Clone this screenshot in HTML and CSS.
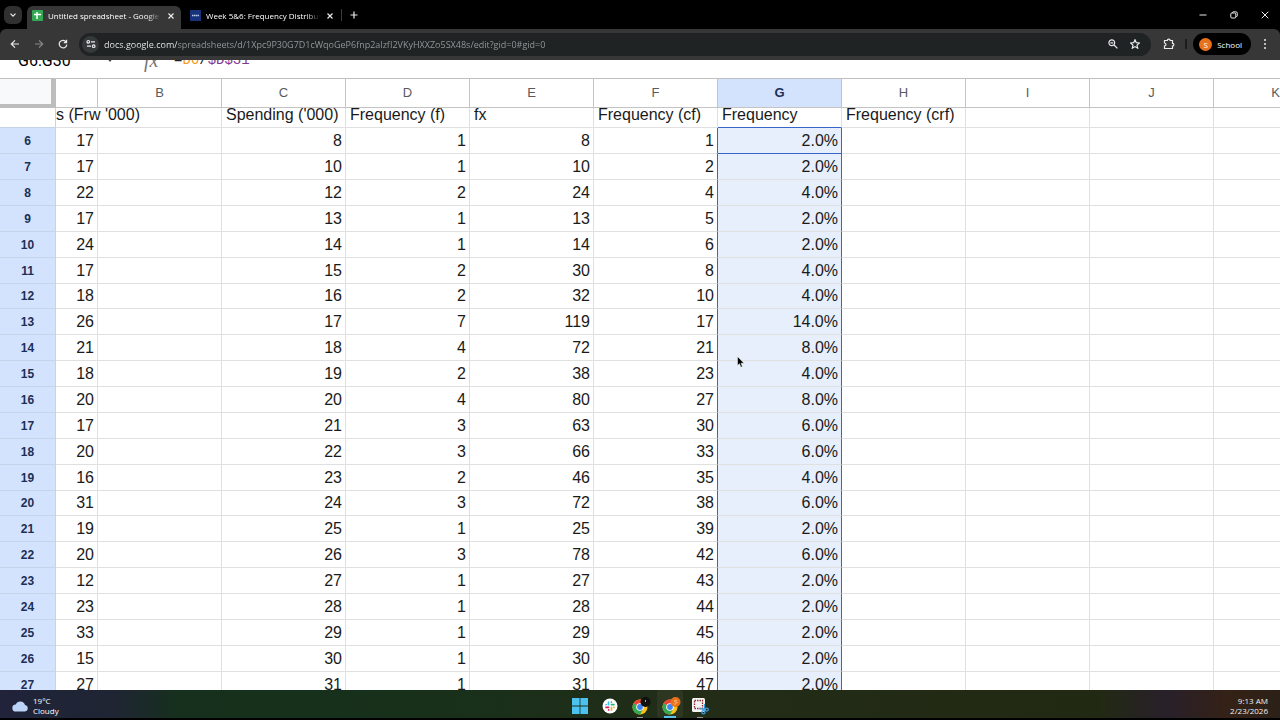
FILE: index.html
```html
<!DOCTYPE html>
<html lang="en">
<head>
    <meta charset="UTF-8">
    <meta name="viewport" content="width=device-width, initial-scale=1.0">
    <title>Untitled spreadsheet - Google Sheets</title>
    <link rel="stylesheet" href="styles.css">
</head>
<body>
  <header class="browser">
    <div class="tabBar">
      <button class="tabSearch" aria-label="Search tabs">
        <svg width="8" height="8" viewBox="0 0 8 8"><path d="M1.5 2.7 4 5.2 6.5 2.7"/></svg>
      </button>
      <div class="tab active">
        <svg class="favicon" width="11" height="11" viewBox="0 0 11 11"><rect width="11" height="11" rx="1" fill="#34a853"/><path d="M5 2v7M2 4.5h7" stroke="#fff" stroke-width="1.5"/></svg>
        <a class="tabTitle" href="#">Untitled spreadsheet - Google S</a>
        <button aria-label="Close tab"><svg width="8" height="8" viewBox="0 0 8 8"><path d="M1.5 1.5l5 5M6.5 1.5l-5 5"/></svg></button>
      </div>
      <div class="tab">
        <svg class="favicon" width="11" height="11" viewBox="0 0 11 11"><rect width="11" height="11" fill="#15327a"/><path d="M2 5.5h7" stroke="#b9c7ea" stroke-width="1.3" stroke-dasharray="1.6 .4"/></svg>
        <a class="tabTitle" href="#">Week 5&amp;6: Frequency Distribut</a>
        <button aria-label="Close tab"><svg width="8" height="8" viewBox="0 0 8 8"><path d="M1.5 1.5l5 5M6.5 1.5l-5 5"/></svg></button>
      </div>
      <button class="newTab" aria-label="New tab"><svg width="8" height="8" viewBox="0 0 8 8"><path d="M4 .5v7M.5 4h7"/></svg></button>
      <div class="windowBtns">
        <button aria-label="Minimize"><svg width="8" height="8" viewBox="0 0 8 8"><path d="M.5 4h7"/></svg></button>
        <button aria-label="Restore"><svg width="8" height="8" viewBox="0 0 8 8"><rect x=".8" y="2" width="5" height="5" rx="1"/><path d="M2.5 2V1.6q0-.8.8-.8h2.5q1.5 0 1.5 1.5v2.4q0 .8-.8.8H6"/></svg></button>
        <button aria-label="Close"><svg width="8" height="8" viewBox="0 0 8 8"><path d="M.7.7l6.6 6.6M7.3.7.7 7.3"/></svg></button>
      </div>
    </div>

    <div class="toolbar">
      <div class="navBtns">
        <button aria-label="Back"><svg width="10" height="10" viewBox="0 0 10 10"><path d="M9 5H1.5M5 1.3 1.3 5 5 8.7"/></svg></button>
        <button class="off" aria-label="Forward" disabled><svg width="10" height="10" viewBox="0 0 10 10"><path d="M1 5h7.5M5 1.3 8.7 5 5 8.7"/></svg></button>
        <button aria-label="Reload"><svg width="10" height="10" viewBox="0 0 10 10"><path d="M8.2 3A3.8 3.8 0 1 0 8.8 5.6M8.6.8v2.8H5.8"/></svg></button>
      </div>
      <div class="urlBox">
        <button class="siteInfo" aria-label="Site information"><svg width="10" height="10" viewBox="0 0 10 10"><circle cx="2.3" cy="2.8" r="1.3"/><path d="M5 2.8h4M1 7.2h4"/><circle cx="7.7" cy="7.2" r="1.3"/></svg></button>
        <input class="url" type="text" aria-label="Address" value="docs.google.com/spreadsheets/d/1Xpc9P30G7D1cWqoGeP6fnp2alzfI2VKyHXXZo5SX48s/edit?gid=0#gid=0">
        <button aria-label="Zoom"><svg width="10" height="10" viewBox="0 0 10 10"><circle cx="3.8" cy="3.8" r="2.9"/><path d="M6 6l3.4 3.4M2.4 3.8h2.8"/></svg></button>
        <button aria-label="Bookmark"><svg width="10" height="10" viewBox="0 0 10 10"><path d="M5 .8 6.3 3.7l3.1.3L7 6.1l.7 3.1L5 7.6 2.3 9.2 3 6.1.6 4l3.1-.3z"/></svg></button>
      </div>
      <button class="extensions" aria-label="Extensions"><svg width="12" height="12" viewBox="0 0 12 12"><path d="M1.5 2.5h2.8a1.4 1.4 0 0 1 2.8 0h2.4v2.8a1.4 1.4 0 0 1 0 2.8v2.4h-8V8q1.5-.4 1.5-1.5T1.5 5z"/></svg></button>
      <span class="divider"></span>
      <button class="profile"><span>S</span>School</button>
      <button class="more" aria-label="Menu"><svg width="4" height="12" viewBox="0 0 4 12"><circle cx="2" cy="2" r="1"/><circle cx="2" cy="6" r="1"/><circle cx="2" cy="10" r="1"/></svg></button>
    </div>
  </header>

  <main class="sheet">
    <div class="formulaBar">
      <input class="nameBox" type="text" aria-label="Name box" value="G6:G30">
      <svg class="drop" width="8" height="5" viewBox="0 0 8 5"><path d="M0 0h8L4 5z" fill="#444"/></svg>
      <span class="fx">fx</span>
      <div class="formula" contenteditable="true">=<span class="ref1">D6</span>/<span class="ref2">$D$31</span></div>
    </div>

    <div class="gridWrap">
      <table class="grid">
        <colgroup>
          <col class="colNum"><col class="colA"><col span="10">
        </colgroup>
        <thead>
          <tr><th class="corner"></th><th></th><th>B</th><th>C</th><th>D</th><th>E</th><th>F</th><th class="selected">G</th><th>H</th><th>I</th><th>J</th><th>K</th></tr>
        </thead>
        <tbody>
          <tr class="titles"><th></th><td class="over">s (Frw '000)</td><td></td><td>Spending ('000)</td><td>Frequency (f)</td><td>fx</td><td>Frequency (cf)</td><td>Frequency</td><td>Frequency (crf)</td><td></td><td></td><td></td></tr>
          <tr><th>6</th><td>17</td><td></td><td>8</td><td>1</td><td>8</td><td>1</td><td>2.0%</td><td></td><td></td><td></td><td></td></tr>
          <tr><th>7</th><td>17</td><td></td><td>10</td><td>1</td><td>10</td><td>2</td><td>2.0%</td><td></td><td></td><td></td><td></td></tr>
          <tr><th>8</th><td>22</td><td></td><td>12</td><td>2</td><td>24</td><td>4</td><td>4.0%</td><td></td><td></td><td></td><td></td></tr>
          <tr><th>9</th><td>17</td><td></td><td>13</td><td>1</td><td>13</td><td>5</td><td>2.0%</td><td></td><td></td><td></td><td></td></tr>
          <tr><th>10</th><td>24</td><td></td><td>14</td><td>1</td><td>14</td><td>6</td><td>2.0%</td><td></td><td></td><td></td><td></td></tr>
          <tr><th>11</th><td>17</td><td></td><td>15</td><td>2</td><td>30</td><td>8</td><td>4.0%</td><td></td><td></td><td></td><td></td></tr>
          <tr><th>12</th><td>18</td><td></td><td>16</td><td>2</td><td>32</td><td>10</td><td>4.0%</td><td></td><td></td><td></td><td></td></tr>
          <tr><th>13</th><td>26</td><td></td><td>17</td><td>7</td><td>119</td><td>17</td><td>14.0%</td><td></td><td></td><td></td><td></td></tr>
          <tr><th>14</th><td>21</td><td></td><td>18</td><td>4</td><td>72</td><td>21</td><td>8.0%</td><td></td><td></td><td></td><td></td></tr>
          <tr><th>15</th><td>18</td><td></td><td>19</td><td>2</td><td>38</td><td>23</td><td>4.0%</td><td></td><td></td><td></td><td></td></tr>
          <tr><th>16</th><td>20</td><td></td><td>20</td><td>4</td><td>80</td><td>27</td><td>8.0%</td><td></td><td></td><td></td><td></td></tr>
          <tr><th>17</th><td>17</td><td></td><td>21</td><td>3</td><td>63</td><td>30</td><td>6.0%</td><td></td><td></td><td></td><td></td></tr>
          <tr><th>18</th><td>20</td><td></td><td>22</td><td>3</td><td>66</td><td>33</td><td>6.0%</td><td></td><td></td><td></td><td></td></tr>
          <tr><th>19</th><td>16</td><td></td><td>23</td><td>2</td><td>46</td><td>35</td><td>4.0%</td><td></td><td></td><td></td><td></td></tr>
          <tr><th>20</th><td>31</td><td></td><td>24</td><td>3</td><td>72</td><td>38</td><td>6.0%</td><td></td><td></td><td></td><td></td></tr>
          <tr><th>21</th><td>19</td><td></td><td>25</td><td>1</td><td>25</td><td>39</td><td>2.0%</td><td></td><td></td><td></td><td></td></tr>
          <tr><th>22</th><td>20</td><td></td><td>26</td><td>3</td><td>78</td><td>42</td><td>6.0%</td><td></td><td></td><td></td><td></td></tr>
          <tr><th>23</th><td>12</td><td></td><td>27</td><td>1</td><td>27</td><td>43</td><td>2.0%</td><td></td><td></td><td></td><td></td></tr>
          <tr><th>24</th><td>23</td><td></td><td>28</td><td>1</td><td>28</td><td>44</td><td>2.0%</td><td></td><td></td><td></td><td></td></tr>
          <tr><th>25</th><td>33</td><td></td><td>29</td><td>1</td><td>29</td><td>45</td><td>2.0%</td><td></td><td></td><td></td><td></td></tr>
          <tr><th>26</th><td>15</td><td></td><td>30</td><td>1</td><td>30</td><td>46</td><td>2.0%</td><td></td><td></td><td></td><td></td></tr>
          <tr><th>27</th><td>27</td><td></td><td>31</td><td>1</td><td>31</td><td>47</td><td>2.0%</td><td></td><td></td><td></td><td></td></tr>
        </tbody>
      </table>
    </div>
  </main>

  <footer class="taskbar">
    <button class="weather">
      <svg width="17" height="12" viewBox="0 0 17 12"><path d="M4 11.5a3.5 3.5 0 0 1-.3-7A5 5 0 0 1 13 5a3.3 3.3 0 0 1 0 6.5z" fill="#bcd4f8"/></svg>
      <span>19°C<br>Cloudy</span>
    </button>
    <div class="apps">
      <button aria-label="Start"><svg width="16" height="16" viewBox="0 0 16 16"><path d="M0 0h7.600v7.600H0zM8.400 0H16v7.600H8.400zM0 8.400h7.600V16H0zM8.400 8.400H16V16H8.400z" fill="#4cc2f1"/></svg></button>
      <button aria-label="Slack">
        <svg width="16" height="16" viewBox="0 0 16 16"><circle cx="8" cy="8" r="7.500" fill="#fff"/><g fill="none" stroke-width="1.700" stroke-linecap="round"><path d="M6.500 4v2.700M4 6.600h.1" stroke="#36c5f0"/><path d="M9.400 6.600H12M9.400 4v.1" stroke="#2eb67d"/><path d="M9.500 9.400V12M12 9.400h-.1" stroke="#ecb22e"/><path d="M4 9.400h2.600M6.600 12v-.1" stroke="#e01e5a"/></g></svg>
      </button>
      <button class="running" aria-label="Chrome">
        <svg width="22" height="18" viewBox="-3 0 22 18"><circle cx="8" cy="10" r="7.500" fill="#fbc116"/><path d="M8 10 1.500 6.250A7.500 7.500 0 0 1 14.500 6.250z" fill="#ea4335"/><path d="M8 10 1.500 6.250A7.500 7.500 0 0 0 8 17.500l3-5z" fill="#34a853"/><circle cx="8" cy="10" r="3.800" fill="#fff"/><circle cx="8" cy="10" r="2.900" fill="#4285f4"/><circle cx="13.500" cy="5" r="5" fill="#111"/><path d="M13.500 3v2" stroke="#aaa"/></svg>
      </button>
      <button class="running current" aria-label="Chrome, School">
        <svg width="22" height="18" viewBox="-3 0 22 18"><circle cx="8" cy="10" r="7.500" fill="#fbc116"/><path d="M8 10 1.500 6.250A7.500 7.500 0 0 1 14.500 6.250z" fill="#ea4335"/><path d="M8 10 1.500 6.250A7.500 7.500 0 0 0 8 17.500l3-5z" fill="#34a853"/><circle cx="8" cy="10" r="3.800" fill="#fff"/><circle cx="8" cy="10" r="2.900" fill="#4285f4"/><circle cx="13.500" cy="5" r="5" fill="#e8711c"/><path d="M15 3.600q-2.600-1-2.700.3t2 1.200-.1 1.500-2.300-.2" fill="none" stroke="#ffc48c" stroke-width=".8"/></svg>
      </button>
      <button class="running" aria-label="Snipping Tool">
        <svg width="18" height="18" viewBox="0 0 18 18"><rect x="1" y="1" width="13" height="14" rx="1.500" fill="#f4f4f4"/><rect x="3.500" y="3.500" width="8" height="8" fill="none" stroke="#8d2a32" stroke-width="1.300" stroke-dasharray="1.500 1"/><g fill="none" stroke="#3d9bdc" stroke-width="1.300"><path d="M13.500 7v6M8.500 11.500l6 1"/><circle cx="12.400" cy="15.300" r="1.600"/><circle cx="15.800" cy="12.600" r="1.500"/></g></svg>
      </button>
    </div>
    <div class="clock">9:13 AM<br>2/23/2026</div>
  </footer>

  <svg class="cursor" width="8" height="12" viewBox="0 0 8 12"><path d="M.5.500v9l2-1.800 1.400 3.500 1.500-.6L4 7.300h3z" fill="#000" stroke="#fff" stroke-width=".5"/></svg>
</body>
</html>
```
FILE: styles.css
```css
* {
  box-sizing: border-box;
}

body {
  margin: 0;
  height: 100vh;
  display: flex;
  flex-direction: column;
  overflow: hidden;
  background-color: #000;
  font-family: "Open Sans", "Noto Sans", sans-serif;
}

button {
  display: flex;
  align-items: center;
  justify-content: center;
  padding: 0;
  border: 0;
  background: none;
  color: #fff;
  font: inherit;
  flex-shrink: 0;
}

input {
  padding: 0;
  border: 0;
  outline: 0;
  background: none;
}

/* browser */
.browser {
  flex-shrink: 0;
  color: #e8eaed;
  font-size: 8px;
}

.browser svg {
  fill: none;
  stroke: #e8eaed;
  stroke-width: 1.2;
}

.browser .favicon {
  flex-shrink: 0;
  stroke: none;
}

.tabBar {
  display: flex;
  align-items: center;
  height: 29px;
}

.tabSearch {
  width: 18px;
  height: 18px;
  margin: 0 5px 0 4px;
  border-radius: 6px;
  background-color: #303030;
}

.tab {
  display: flex;
  align-items: center;
  gap: 5px;
  width: 154px;
  height: 23px;
  margin-top: 6px;
  padding: 0 5px 4px;
  border-radius: 6px 6px 0 0;
}

.tab + .tab {
  width: 160px;
  padding-left: 9px;
  padding-right: 6px;
}

.tab.active {
  background-color: #373737;
}

.tabTitle {
  flex: 1;
  overflow: hidden;
  color: #fff;
  font-weight: 500;
  text-decoration: none;
  white-space: nowrap;
  line-height: 16px;
  -webkit-mask-image: linear-gradient(to right, #000 88%, transparent);
  mask-image: linear-gradient(to right, #000 88%, transparent);
}

.tab button {
  width: 10px;
  height: 16px;
}

.newTab {
  width: 24px;
  height: 12px;
  border-left: 1px solid #3a3a3a;
}

.windowBtns {
  display: flex;
  gap: 14px;
  margin-left: auto;
  padding-right: 7px;
}

.windowBtns button {
  width: 17px;
  height: 16px;
}

.windowBtns svg {
  stroke-width: 1;
}

.toolbar {
  display: flex;
  align-items: center;
  height: 31px;
  padding: 0 13px 1px 5px;
  border-radius: 6px 6px 0 0;
  background-color: #373737;
}

.navBtns {
  display: flex;
  gap: 4px;
  margin-right: 6px;
}

.navBtns button {
  width: 20px;
  height: 20px;
}

.navBtns .off {
  opacity: .45;
}

.urlBox {
  flex: 1;
  display: flex;
  align-items: center;
  gap: 12px;
  height: 23px;
  padding: 0 11px 0 3px;
  border-radius: 12px;
  background-color: #1f2323;
}

.siteInfo {
  width: 17px;
  height: 17px;
  margin-right: -7px;
  border-radius: 50%;
  background-color: #363939;
}

/* host is brighter than the rest of the address */
.url {
  flex: 1;
  height: 20px;
  font-family: inherit;
  font-size: 9px;
  color: transparent;
  background: linear-gradient(to right, #f1f3f4 73px, #969c9e 73px);
  -webkit-background-clip: text;
  background-clip: text;
}

.extensions {
  margin: 0 10px 0 12px;
}

.divider {
  width: 2px;
  height: 10px;
  background-color: #1c1c1c;
}

.profile {
  gap: 5px;
  height: 22px;
  padding: 0 9px 0 6px;
  margin: 0 12px 0 6px;
  border-radius: 11px;
  background-color: #000;
}

.profile span {
  width: 13px;
  height: 13px;
  border-radius: 50%;
  background-color: #e8711c;
  line-height: 13px;
}

.browser .more svg {
  fill: #e8eaed;
  stroke: none;
}

/* spreadsheet */
.sheet {
  flex: 1;
  min-height: 0;
  display: flex;
  flex-direction: column;
  overflow: hidden;
  background-color: #fff;
  font-family: "Liberation Sans", Arial, sans-serif;
}

/* scrolled up, only the lower part shows */
.formulaBar {
  display: flex;
  align-items: flex-end;
  flex-shrink: 0;
  height: 18px;
  padding: 0 0 8px 18px;
  overflow: hidden;
  color: #202124;
  line-height: 20px;
}

.nameBox {
  width: 88px;
  height: 20px;
  font-family: Roboto, sans-serif;
  font-size: 16px;
}

.drop {
  margin-bottom: 8px;
}

.fx {
  width: 30px;
  margin-left: 30px;
  color: #777;
  font-family: "Liberation Serif", serif;
  font-size: 20px;
  font-style: italic;
}

.formula {
  flex: 1;
  outline: 0;
  font-family: "Liberation Mono", monospace;
  font-size: 14px;
}

.ref1 {
  color: #f7981d;
}

.ref2 {
  color: #7e3794;
}

.gridWrap {
  flex: 1;
  min-height: 0;
  overflow: hidden;
  border-top: 1px solid #c0c0c0;
}

.grid {
  width: 1338px;
  table-layout: fixed;
  border-collapse: separate;
  border-spacing: 0;
  color: #1a1a1a;
  font-size: 16px;
}

.colNum {
  width: 56px;
}

.colA {
  width: 42px;
}

.grid th,
.grid td {
  height: 26px;
  padding: 0 3px;
  border-right: 1px solid #e0e0e0;
  border-bottom: 1px solid #e0e0e0;
  line-height: 20px;
  text-align: right;
  white-space: nowrap;
}

/* keeps the zoomed row pitch just under 26px */
.grid tbody tr:nth-child(8n) > * {
  height: 25px;
}

.grid thead th {
  height: 29px;
  border-color: #c4c4c4;
  color: #575b5f;
  font-size: 13px;
  font-weight: normal;
  text-align: center;
}

.grid thead .corner {
  border-right: 5px solid #bdbdbd;
  border-bottom: 4px solid #bdbdbd;
  background-color: #f8f9fa;
}

.grid thead .selected {
  background-color: #d3e3fd;
  color: #1c2f57;
  font-weight: bold;
}

.grid tbody th {
  border-color: #c6d4ea;
  background-color: #d3e3fd;
  color: #1c2f57;
  font-size: 12px;
  text-align: center;
}

.grid .titles > * {
  height: 20px;
  padding: 0 0 5px 4px;
  line-height: 14px;
  text-align: left;
}

.grid .titles th {
  background-color: #fff;
}

.grid .titles .over {
  padding-left: 0;
  border-right-color: transparent;
}

/* selected range, column G */
.grid tr:not(.titles) td:nth-child(8) {
  border-right-color: #3566c8;
  background-color: #e6effb;
}

.grid tr:not(.titles) td:nth-child(7) {
  border-right-color: #3566c8;
}

.grid .titles td:nth-child(8),
.grid .titles + tr td:nth-child(8) {
  border-bottom-color: #3566c8;
}

/* taskbar */
.taskbar {
  flex-shrink: 0;
  display: grid;
  grid-template-columns: 1fr auto 1fr;
  align-items: center;
  height: 30px;
  padding: 0 12px;
  border-bottom: 2px solid #000;
  background: linear-gradient(to right, #20233a 0, #1f2533 9%, #16301d 14%, #18301a 35%, #222c17 55%, #222913 86%, #28202a 91%, #352116 96%, #2b2118);
  color: #f1f1f1;
  font-size: 8px;
  line-height: 10px;
}

.weather {
  gap: 4px;
  justify-self: start;
  padding-top: 3px;
  text-align: left;
}

.apps {
  display: flex;
  gap: 4px;
}

.apps button {
  width: 26px;
  height: 28px;
  padding-top: 4px;
}

/* small mark under an open app */
.apps .running {
  background: linear-gradient(#999, #999) center bottom / 6px 1px no-repeat;
}

.apps .current {
  border-radius: 3px;
  background: linear-gradient(#59c2e8, #59c2e8) center bottom / 12px 2px no-repeat #2c3620;
}

.clock {
  justify-self: end;
  padding-top: 3px;
  text-align: right;
}

/* mouse pointer over the sheet */
.cursor {
  position: absolute;
  left: 737px;
  top: 356px;
}
```
